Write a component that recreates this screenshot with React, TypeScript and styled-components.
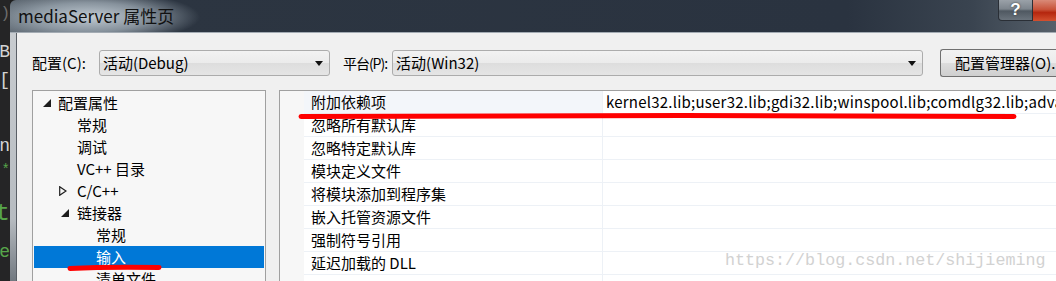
import React from 'react';
import styled, { createGlobalStyle } from 'styled-components';

const GlobalStyle = createGlobalStyle`
    html, body {
        margin: 0;
        padding: 0;
        background: #1e1e1e;
    }
    body {
        font-family: "Noto Sans CJK SC", "Noto Sans", sans-serif;
    }
`
const Screen = styled.div`
    position: relative;
    width: 1056px;
    height: 281px;
    overflow: hidden;
    display: flex;
    background: #1e1e1e;
`
const EditorStrip = styled.div`
    width: 10px;
    flex: none;
    background: #252526;
    display: flex;
    flex-direction: column;
    align-items: flex-end;
    overflow: hidden;
    font-family: "Liberation Mono", monospace;
`
const EditorGlyph = styled.span<{ $color: string; $top: number; $size?: number }>`
    margin-top: ${(p) => p.$top}px;
    color: ${(p) => p.$color};
    font-size: ${(p) => p.$size || 18}px;
    line-height: 20px;
    white-space: nowrap;
`
const Window = styled.div`
    flex: 1;
    display: flex;
    flex-direction: column;
    min-width: 0;
`
const TitleBar = styled.div`
    height: 32px;
    flex: none;
    display: flex;
    align-items: flex-start;
    border-top-left-radius: 6px;
    background:
        radial-gradient(ellipse 110px 26px at 80px 17px, rgba(200,210,218,0.95) 0%, rgba(160,172,182,0.75) 55%, rgba(43,52,64,0) 100%),
        linear-gradient(90deg, #58626c 0%, #2c3541 14%, #2a3340 80%, #3a4450 92%, #56606a 100%);
    border-bottom: 1px solid #a3abb3;
`
const Title = styled.div`
    padding: 5px 0 0 8px;
    font-size: 17px;
    line-height: 22px;
    color: #111;
`
const CaptionButtons = styled.div`
    margin-left: auto;
    display: flex;
`
const HelpButton = styled.div`
    width: 35px;
    height: 21px;
    box-sizing: border-box;
    border: 1px solid #2a2f36;
    border-top: none;
    border-bottom-left-radius: 4px;
    background: linear-gradient(180deg, #9aa1a8 0%, #7d858d 45%, #4f5861 55%, #6a737c 100%);
    color: #fff;
    font-family: "Liberation Sans", sans-serif;
    font-weight: bold;
    font-size: 17px;
    line-height: 20px;
    text-align: center;
    text-shadow: 0 0 2px #333;
`
const CloseButton = styled.div`
    width: 23px;
    height: 21px;
    background: linear-gradient(180deg, #d98a78 0%, #c8533a 45%, #b5260e 60%, #d3502f 100%);
`
const FrameShade = styled.div`
    height: 1px;
    background: #1c1f23;
`
const Frame = styled.div`
    flex: 1;
    display: flex;
    background: linear-gradient(180deg, #c8ccd0 0%, #b7bcc1 70%, #5e666e 100%);
    padding-left: 6px;
`
const Content = styled.div`
    flex: 1;
    min-width: 0;
    border-left: 1px solid #5a5f66;
    background: #f0f0f0;
    padding: 17px 0 0 15px;
    display: flex;
    flex-direction: column;
`
const ConfigBar = styled.div`
    display: flex;
    align-items: center;
    height: 26px;
    font-size: 15px;
    color: #000;
`
const FieldLabel = styled.span<{ $gap: number; $squeeze?: boolean }>`
    flex: none;
    margin-right: ${(p) => p.$gap}px;
    line-height: 26px;
    white-space: nowrap;
    letter-spacing: ${(p) => (p.$squeeze ? '-1px' : '0')};
    font-size: ${(p) => (p.$squeeze ? 14 : 15)}px;
`
const Combo = styled.div<{ $width?: number }>`
    ${(p) => (p.$width ? `width: ${p.$width}px; flex: none;` : 'flex: 1; min-width: 0;')}
    height: 26px;
    box-sizing: border-box;
    display: flex;
    align-items: center;
    padding: 0 6px 0 3px;
    border: 1px solid #acacac;
    border-radius: 3px;
    background: linear-gradient(180deg, #f2f2f2 0%, #ebebeb 50%, #dddddd 51%, #e5e5e5 100%);
`
const ComboText = styled.span`
    flex: 1;
    line-height: 24px;
    white-space: nowrap;
`
const ComboArrow = styled.span`
    width: 0;
    height: 0;
    border-left: 4px solid transparent;
    border-right: 4px solid transparent;
    border-top: 5px solid #111;
`
const ManagerButton = styled.div`
    margin-left: 17px;
    height: 28px;
    box-sizing: border-box;
    flex: none;
    width: 116px;
    padding-left: 14px;
    border: 1px solid #707070;
    border-right: none;
    border-radius: 3px 0 0 3px;
    background: linear-gradient(180deg, #f2f2f2 0%, #ebebeb 50%, #dddddd 51%, #cfcfcf 100%);
    line-height: 26px;
    white-space: nowrap;
    overflow: hidden;
`
const MainArea = styled.div`
    margin-top: 14px;
    flex: 1;
    display: flex;
    gap: 13px;
    min-height: 0;
`
const TreePanel = styled.div`
    width: 234px;
    flex: none;
    box-sizing: border-box;
    border: 1px solid #a0a0a0;
    border-bottom: none;
    background: #f7f7f7;
    padding: 1px 1px 0;
    font-size: 15px;
`
const TreeItem = styled.div<{ $level: number; $selected?: boolean }>`
    position: relative;
    height: 22px;
    line-height: 22px;
    padding-left: ${(p) => 24 + p.$level * 19}px;
    color: ${(p) => (p.$selected ? '#fff' : '#000')};
    background: ${(p) => (p.$selected ? '#0078d7' : 'transparent')};
    white-space: nowrap;
`
const Expander = styled.span<{ $open: boolean; $level: number }>`
    position: absolute;
    top: ${(p) => (p.$open ? 7 : 6)}px;
    left: ${(p) => (p.$open ? 9 : 7) + p.$level * 19 - (p.$level ? 1 : 0)}px;
    display: flex;
`
const Grid = styled.div`
    flex: 1;
    min-width: 0;
    border-top: 1px solid #a0a0a0;
    border-left: 1px solid #a0a0a0;
    background: #f7f7f7;
    display: flex;
    flex-direction: column;
    padding-left: 24px;
    font-size: 15px;
`
const GridRow = styled.div`
    display: flex;
    height: 23px;
    box-sizing: border-box;
    border-bottom: 1px solid #edf1f6;
    background: #fff;
    flex: none;
`
const NameCell = styled.div<{ $active?: boolean }>`
    width: 299px;
    flex: none;
    box-sizing: border-box;
    padding-left: 7px;
    line-height: 22px;
    border-right: 1px solid #edf1f6;
    background: ${(p) => (p.$active ? '#f3f6fa' : '#fff')};
    color: #000;
    white-space: nowrap;
`
const ValueCell = styled.div`
    flex: 1;
    min-width: 0;
    padding-left: 3px;
    line-height: 22px;
    letter-spacing: 0.23px;
    white-space: nowrap;
    overflow: hidden;
    color: #000;
`
const Annotation = styled.svg`
    position: absolute;
    left: 0;
    top: 0;
    pointer-events: none;
`
const Watermark = styled.div`
    position: absolute;
    left: 725px;
    top: 249px;
    font-family: "Liberation Mono", monospace;
    font-size: 16.7px;
    line-height: 24px;
    color: #d2d2d2;
    text-shadow: 0 0 1px #fff;
    white-space: nowrap;
`

type Node = { label: string; level: number; expander?: 'open' | 'closed'; selected?: boolean };

const treeNodes: Node[] = [
    { label: '配置属性', level: 0, expander: 'open' },
    { label: '常规', level: 1 },
    { label: '调试', level: 1 },
    { label: 'VC++ 目录', level: 1 },
    { label: 'C/C++', level: 1, expander: 'closed' },
    { label: '链接器', level: 1, expander: 'open' },
    { label: '常规', level: 2 },
    { label: '输入', level: 2, selected: true },
    { label: '清单文件', level: 2 },
];

const properties: { name: string; value?: string }[] = [
    {
        name: '附加依赖项',
        value: 'kernel32.lib;user32.lib;gdi32.lib;winspool.lib;comdlg32.lib;advapi32.lib;shell32.lib;ole32.lib;oleaut32.lib;uuid.lib;odbc32.lib;odbccp32.lib;%(AdditionalDependencies)',
    },
    { name: '忽略所有默认库' },
    { name: '忽略特定默认库' },
    { name: '模块定义文件' },
    { name: '将模块添加到程序集' },
    { name: '嵌入托管资源文件' },
    { name: '强制符号引用' },
    { name: '延迟加载的 DLL' },
    { name: '' },
];

const ExpandIcon: React.FC<{ open: boolean }> = ({ open }) => (
    open ? (
        <svg width="8" height="8" viewBox="0 0 8 8">
            <path d="M8 0 L8 8 L0 8 Z" fill="#1e1e1e" />
        </svg>
    ) : (
        <svg width="8" height="10" viewBox="0 0 8 10">
            <path d="M0.7 0.7 L7 5 L0.7 9.3 Z" fill="none" stroke="#1e1e1e" strokeWidth="1.2" />
        </svg>
    )
);

const App: React.FC = () => {
    return (
        <>
            <GlobalStyle />
            <Screen>
                <EditorStrip>
                    <EditorGlyph $color="#6d6d6d" $top={4} $size={16}>员)</EditorGlyph>
                    <EditorGlyph $color="#d4d4d4" $top={18}>[B</EditorGlyph>
                    <EditorGlyph $color="#d4d4d4" $top={8}>[</EditorGlyph>
                    <EditorGlyph $color="#d4d4d4" $top={46}>n</EditorGlyph>
                    <EditorGlyph $color="#57a64a" $top={4} $size={14}>*</EditorGlyph>
                    <EditorGlyph $color="#57a64a" $top={24} $size={24}>t</EditorGlyph>
                    <EditorGlyph $color="#57a64a" $top={18}>e</EditorGlyph>
                </EditorStrip>
                <Window>
                    <TitleBar>
                        <Title>mediaServer 属性页</Title>
                        <CaptionButtons>
                            <HelpButton>?</HelpButton>
                            <CloseButton />
                        </CaptionButtons>
                    </TitleBar>
                    <FrameShade />
                    <Frame>
                        <Content>
                            <ConfigBar>
                                <FieldLabel $gap={13}>配置(C):</FieldLabel>
                                <Combo $width={231}>
                                    <ComboText>活动(Debug)</ComboText>
                                    <ComboArrow />
                                </Combo>
                                <FieldLabel $gap={5} $squeeze style={{ marginLeft: 13 }}>平台(P):</FieldLabel>
                                <Combo>
                                    <ComboText>活动(Win32)</ComboText>
                                    <ComboArrow />
                                </Combo>
                                <ManagerButton>配置管理器(O)...</ManagerButton>
                            </ConfigBar>
                            <MainArea>
                                <TreePanel>
                                    {treeNodes.map((node, i) => (
                                        <TreeItem key={i} $level={node.level} $selected={node.selected}>
                                            {node.expander && (
                                                <Expander $open={node.expander === 'open'} $level={node.level}>
                                                    <ExpandIcon open={node.expander === 'open'} />
                                                </Expander>
                                            )}
                                            {node.label}
                                        </TreeItem>
                                    ))}
                                </TreePanel>
                                <Grid>
                                    {properties.map((prop, i) => (
                                        <GridRow key={i}>
                                            <NameCell $active={i === 0}>{prop.name}</NameCell>
                                            <ValueCell>{prop.value}</ValueCell>
                                        </GridRow>
                                    ))}
                                </Grid>
                            </MainArea>
                        </Content>
                    </Frame>
                </Window>
                <Annotation width="1056" height="281" viewBox="0 0 1056 281">
                    <path d="M301 116.5 C 500 115, 800 115.5, 1014 116.5" stroke="#f00" strokeWidth="5" strokeLinecap="round" fill="none" />
                    <path d="M70 268.5 C 100 267, 130 267, 159 267.5" stroke="#f00" strokeWidth="5" strokeLinecap="round" fill="none" />
                </Annotation>
                <Watermark>https://blog.csdn.net/shijieming</Watermark>
            </Screen>
        </>
    );
};

export default App;
